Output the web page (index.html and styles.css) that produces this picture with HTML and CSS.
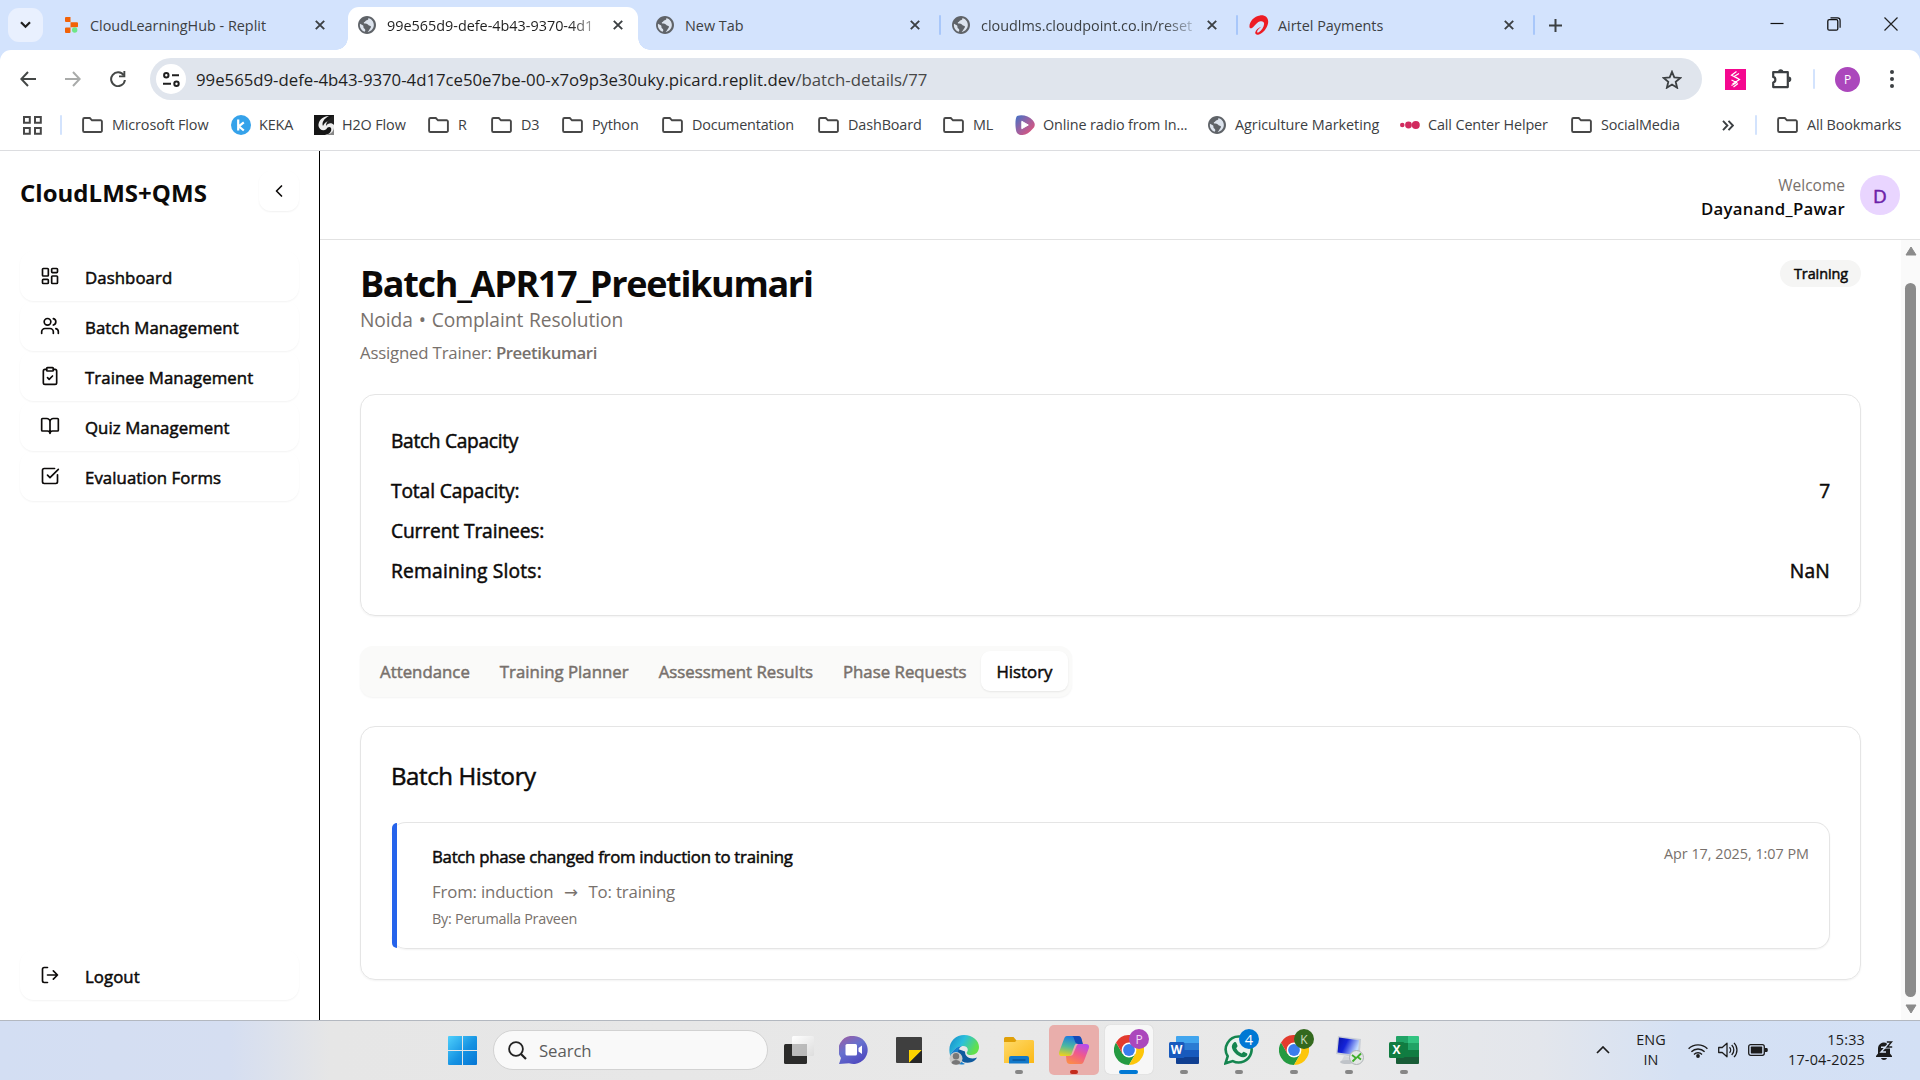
FILE: index.html
```html
<!DOCTYPE html>
<html lang="en">
<head>
<meta charset="utf-8">
<title>CloudLMS+QMS</title>
<link rel="stylesheet" href="styles.css">
</head>
<body>
<svg class="defs" width="0" height="0" aria-hidden="true">
  <defs>
    <symbol id="globe" viewBox="2 2 20 20"><path fill="#5f6368" d="M12 2C6.48 2 2 6.48 2 12s4.48 10 10 10 10-4.48 10-10S17.52 2 12 2z"/><path fill="#dde4ee" d="M13.500 4.200c.3 1.500-.5 2.300-1.700 2.600-1.500.3-1.300 1.600-2.500 1.900-1 .3-1.300 1.300-.2 1.600 1.600.2 3.600.2 4.200 1.500.4 1 1.500 1 2.600 1.400.8.500.6 1.500-.2 2.300-1 1-1.300 2.600-3 4.200 4-.8 6.900-3.900 6.900-7.800 0-3.500-2.400-6.600-6.100-7.700zM4.200 10.500c-.7 3.800 1.300 7.500 5.200 8.900.9-.8.9-1.700.4-2.700-.5-.8-1.500-.9-1.700-1.900-.2-1.300.3-1.900-.8-2.600z"/></symbol>
    <symbol id="x" viewBox="0 0 10 10"><path d="M.8.8l8.400 8.400M9.200.8L.8 9.200" stroke="currentColor" stroke-width="1.900" fill="none"/></symbol>
    <symbol id="folder" viewBox="0 0 21 16"><path d="M2.500 1h5.300l2.200 2.300h8.500A1.300 1.300 0 0 1 19.900 4.600v9A1.300 1.300 0 0 1 18.600 15H2.400A1.300 1.300 0 0 1 1.100 13.700V2.400A1.400 1.400 0 0 1 2.500 1z" fill="none" stroke="#474747" stroke-width="1.900"/></symbol>
    <symbol id="chrome" viewBox="0 0 30 30">
      <path d="M2 7.500A15 15 0 0 0 15 30L21.500 18.700 15 15 8.500 18.700z" fill="#249a41"/>
      <path d="M28 7.500A15 15 0 0 1 15 30L21.500 18.700 15 7.500z" fill="#fdc60a"/>
      <path d="M2 7.500L8.500 18.700 15 15V7.500h13A15 15 0 0 0 2 7.500z" fill="#e33b2e"/>
      <circle cx="15" cy="15" r="7.400" fill="#fff"/><circle cx="15" cy="15" r="5.900" fill="#3b7ded"/>
    </symbol>
  </defs>
</svg>

<div class="screen">
  <div class="tabstrip">
    <button class="tab-search"><svg width="11" height="8" viewBox="0 0 11 8"><path d="M1 1.200l4.500 4.600L10 1.200" fill="none" stroke="#1f1f1f" stroke-width="2.200"/></svg></button>
    <div class="tab tab-first">
      <svg class="favicon" width="14" height="16" viewBox="0 0 14 16"><path d="M1 0h4.500v5H1a1 1 0 0 1-1-1V1a1 1 0 0 1 1-1zM5.500 5.300H12a1 1 0 0 1 1 1v3a1 1 0 0 1-1 1H5.500zM1 10.500h4.500V15a1 1 0 0 1-1 1H1a1 1 0 0 1-1-1v-3.500a1 1 0 0 1 1-1z" fill="#f26207"/><circle cx="9.700" cy="13" r="2.700" fill="#6ee787"/></svg>
      <span class="tab-title">CloudLearningHub - Replit</span>
      <svg class="close"><use href="#x"/></svg>
    </div>
    <div class="tab tab-active">
      <svg class="favicon"><use href="#globe"/></svg>
      <span class="tab-title fade">99e565d9-defe-4b43-9370-4d1</span>
      <svg class="close"><use href="#x"/></svg>
    </div>
    <div class="tab">
      <svg class="favicon"><use href="#globe"/></svg>
      <span class="tab-title">New Tab</span>
      <svg class="close"><use href="#x"/></svg>
    </div>
    <div class="tab tab-ruled">
      <svg class="favicon"><use href="#globe"/></svg>
      <span class="tab-title fade">cloudlms.cloudpoint.co.in/reset</span>
      <svg class="close"><use href="#x"/></svg>
    </div>
    <div class="tab tab-ruled">
      <svg class="favicon airtel" width="20" height="20" viewBox="0 0 20 20"><path d="M.5 12C0 7 5 1 11 .4c6-.6 9 3 8 8-1 4.600-4.500 9.400-9 11-2.500.8-4.200-.2-3.700-2.200.6-2.300 3-4.200 6-5.400-2 1.600-4 3.400-4.200 5-.1 1 .8 1 2 .2 2.500-1.800 4.800-5 5-8 .2-2.200-1.600-3.400-4.500-2.600C7 7.400 5 12.500 2.500 13.200 1.300 13.400.6 13 .5 12z" fill="#ed1c24"/></svg>
      <span class="tab-title">Airtel Payments</span>
      <svg class="close"><use href="#x"/></svg>
    </div>
    <div class="new-tab"><svg width="13" height="13" viewBox="0 0 13 13"><path d="M6.500 0v13M0 6.500h13" stroke="#3c4043" stroke-width="2"/></svg></div>
    <div class="window-controls">
      <svg width="14" height="14" viewBox="0 0 14 14"><path d="M.5 6.500h13" stroke="#111" stroke-width="1.200"/></svg>
      <svg width="14" height="14" viewBox="0 0 14 14"><path d="M3.500.9h7a2.600 2.600 0 0 1 2.600 2.600v7.200" fill="none" stroke="#111" stroke-width="1.200"/><rect x=".8" y="2.700" width="10" height="10.500" rx="1.500" fill="none" stroke="#111" stroke-width="1.300"/></svg>
      <svg width="14" height="14" viewBox="0 0 14 14"><path d="M.5.5l13 13M13.500.5l-13 13" stroke="#222" stroke-width="1.200"/></svg>
    </div>
  </div>

  <div class="toolbar">
    <div class="nav-buttons">
      <svg width="16" height="16" viewBox="0 0 16 16"><path d="M16 8H1.500M8 1L1.300 8 8 15" fill="none" stroke="#444746" stroke-width="2"/></svg>
      <svg width="16" height="16" viewBox="0 0 16 16"><path d="M0 8h14.500M8 1l6.700 7L8 15" fill="none" stroke="#a9abaa" stroke-width="2"/></svg>
      <svg width="16" height="16" viewBox="0 0 16 16"><path d="M13.800 4.400A6.900 6.900 0 1 0 14.900 9" fill="none" stroke="#444746" stroke-width="2"/><path d="M15.300 0v6.300H9V4.400h4.400V0z" fill="#444746"/></svg>
    </div>
    <div class="omnibox">
      <span class="site-info"><svg width="17" height="15" viewBox="0 0 17 15"><g fill="none" stroke="#1f1f1f" stroke-width="2"><circle cx="3.300" cy="3.300" r="2.200"/><path d="M9 3.300h7M0 11.700h8"/><circle cx="13.500" cy="11.700" r="2.200"/></g></svg></span>
      <span class="url">99e565d9-defe-4b43-9370-4d17ce50e7be-00-x7o9p3e30uky.picard.replit.dev<span class="path">/batch-details/77</span></span>
      <svg class="star" width="20" height="19" viewBox="0 0 20 19"><path d="M10 1.800l2.300 5.600 6 .5-4.600 3.900 1.400 5.900-5.100-3.200-5.100 3.200 1.400-5.900L1.700 7.900l6-.5z" fill="none" stroke="#3c4043" stroke-width="1.800"/></svg>
    </div>
    <div class="extensions">
      <svg class="ext-pink" width="21" height="21" viewBox="0 0 21 21"><path d="M0 0h21v21H0z" fill="#f5078f"/><path d="M11.500 2.500L6.500 6.200l7 3.800M14 4.500L9.500 7.200l5 3.300-7 4.500M6.500 11l5 2.500-5 3M13 14.500l-4.500 3.500" fill="none" stroke="#fff" stroke-width="1.200"/></svg>
      <svg class="ext-puzzle" width="22" height="22" viewBox="0 0 22 22"><path d="M2.200 4.200h14.600v14.900H2.200v-4.600a2.900 2.900 0 0 0 0-5.600z" fill="none" stroke="#3c4043" stroke-width="2.200" stroke-linejoin="round"/><path d="M7 4a2.700 2.700 0 0 1 5.400 0zM17.500 8.500a2.800 2.800 0 0 1 0 5.600z" fill="#3c4043"/></svg>
      <i class="rule"></i>
      <span class="profile">P</span>
      <svg width="4" height="18" viewBox="0 0 4 18"><g fill="#3c4043"><circle cx="2" cy="2" r="2"/><circle cx="2" cy="9" r="2"/><circle cx="2" cy="16" r="2"/></g></svg>
    </div>
  </div>

  <div class="bookmarks">
    <svg class="apps" width="19" height="19" viewBox="0 0 19 19"><path d="M1 1h5.800v5.800H1zM12 1h5.800v5.800H12zM1 12h5.800v5.800H1zM12 12h5.800v5.800H12z" fill="none" stroke="#474747" stroke-width="2"/></svg>
    <i class="rule"></i>
    <div class="bm"><svg class="fold"><use href="#folder"/></svg>Microsoft Flow</div>
    <div class="bm"><svg width="20" height="20" viewBox="0 0 20 20"><circle cx="10" cy="10" r="10" fill="#35a2ea"/><path d="M7.200 4.500v11M12.800 7.300l-5 4 5 4.200" fill="none" stroke="#fff" stroke-width="2.200"/></svg>KEKA</div>
    <div class="bm"><svg width="20" height="20" viewBox="0 0 20 20"><path d="M0 0h20v20H0z" fill="#161616"/><path d="M20 2v18h-9c5-1 7-4 6-7-1-2-4-1-4.500 1C9 17 5 14 4.500 11 4 6 8 1.500 15 1 10 3.500 7.500 7.500 9 11c2-4.500 7-6 11-9z" fill="#eee"/><path d="M20 0v10c-2-2.500-6-2.500-8 1 0-4 3-8 8-11z" fill="#222"/><path d="M9 20c6 0 10-2 11-7v7z" fill="#888"/></svg>H2O Flow</div>
    <div class="bm"><svg class="fold"><use href="#folder"/></svg>R</div>
    <div class="bm"><svg class="fold"><use href="#folder"/></svg>D3</div>
    <div class="bm"><svg class="fold"><use href="#folder"/></svg>Python</div>
    <div class="bm tight"><svg class="fold"><use href="#folder"/></svg>Documentation</div>
    <div class="bm"><svg class="fold"><use href="#folder"/></svg>DashBoard</div>
    <div class="bm"><svg class="fold"><use href="#folder"/></svg>ML</div>
    <div class="bm"><svg width="20" height="20" viewBox="0 -1 20 20"><defs><linearGradient id="radio" x1="0" y1="0" x2="1" y2="1"><stop offset="0" stop-color="#3f73c8"/><stop offset=".5" stop-color="#a2609f"/><stop offset="1" stop-color="#f0506e"/></linearGradient></defs><path d="M2 0c5-2 12 0 15.500 4 3 3.500 3 6 0 9C13 19 4 21.500 1.500 16 0 11 0 2.500 2 0z" fill="url(#radio)"/><path d="M6.800 5.300v7.400l6.500-3.700z" fill="#fff" stroke="#fff" stroke-linejoin="round"/></svg>Online radio from In...</div>
    <div class="bm wide"><svg class="favicon"><use href="#globe"/></svg>Agriculture Marketing</div>
    <div class="bm"><svg width="20" height="8" viewBox="0 0 20 8"><g fill="#d12b5f"><circle cx="2.300" cy="4" r="2.300"/><circle cx="8.500" cy="4" r="3.400"/><circle cx="15.800" cy="4" r="4"/></g></svg>Call Center Helper</div>
    <div class="bm"><svg class="fold"><use href="#folder"/></svg>SocialMedia</div>
    <svg class="more" width="12" height="11" viewBox="0 0 12 11"><path d="M1 .8l4.400 4.700L1 10.200M6.500.8l4.400 4.700-4.400 4.700" fill="none" stroke="#3c4043" stroke-width="1.900"/></svg>
    <i class="rule"></i>
    <div class="bm"><svg class="fold"><use href="#folder"/></svg>All Bookmarks</div>
  </div>

  <div class="app">
    <aside class="sidebar">
      <div class="brand"><h2>CloudLMS+QMS</h2><button class="collapse"><svg class="ic" viewBox="0 0 24 24"><path d="m15 18-6-6 6-6"/></svg></button></div>
      <nav class="menu">
        <a class="item"><svg class="ic" viewBox="0 0 24 24"><rect width="7" height="9" x="3" y="3" rx="1"/><rect width="7" height="5" x="14" y="3" rx="1"/><rect width="7" height="9" x="14" y="12" rx="1"/><rect width="7" height="5" x="3" y="16" rx="1"/></svg><span>Dashboard</span></a>
        <a class="item"><svg class="ic" viewBox="0 0 24 24"><path d="M16 21v-2a4 4 0 0 0-4-4H6a4 4 0 0 0-4 4v2"/><circle cx="9" cy="7" r="4"/><path d="M22 21v-2a4 4 0 0 0-3-3.870M16 3.130a4 4 0 0 1 0 7.750"/></svg><span>Batch Management</span></a>
        <a class="item"><svg class="ic" viewBox="0 0 24 24"><rect width="8" height="4" x="8" y="2" rx="1"/><path d="M16 4h2a2 2 0 0 1 2 2v14a2 2 0 0 1-2 2H6a2 2 0 0 1-2-2V6a2 2 0 0 1 2-2h2M9 14l2 2 4-4"/></svg><span>Trainee Management</span></a>
        <a class="item"><svg class="ic" viewBox="0 0 24 24"><path d="M12 7v14M3 18a1 1 0 0 1-1-1V4a1 1 0 0 1 1-1h5a4 4 0 0 1 4 4 4 4 0 0 1 4-4h5a1 1 0 0 1 1 1v13a1 1 0 0 1-1 1h-6a3 3 0 0 0-3 3 3 3 0 0 0-3-3z"/></svg><span>Quiz Management</span></a>
        <a class="item"><svg class="ic" viewBox="0 0 24 24"><path d="M21 10.500V19a2 2 0 0 1-2 2H5a2 2 0 0 1-2-2V5a2 2 0 0 1 2-2h12.500"/><path d="m9 11 3 3L22 4"/></svg><span>Evaluation Forms</span></a>
      </nav>
      <a class="item logout"><svg class="ic" viewBox="0 0 24 24"><path d="M9 21H5a2 2 0 0 1-2-2V5a2 2 0 0 1 2-2h4M16 17l5-5-5-5M21 12H9"/></svg><span>Logout</span></a>
    </aside>

    <div class="main">
      <header class="topbar">
        <div class="who"><span class="welcome">Welcome</span><span class="user">Dayanand_Pawar</span></div>
        <span class="avatar">D</span>
      </header>
      <div class="scroller">
        <main class="content">
          <div class="heading">
            <div>
              <h1>Batch_APR17_Preetikumari</h1>
              <p class="sub">Noida • Complaint Resolution</p>
              <p class="trainer">Assigned Trainer: <b>Preetikumari</b></p>
            </div>
            <span class="badge">Training</span>
          </div>

          <section class="card capacity">
            <h3>Batch Capacity</h3>
            <div class="row"><span>Total Capacity:</span><span>7</span></div>
            <div class="row"><span>Current Trainees:</span><span></span></div>
            <div class="row slots"><span>Remaining Slots:</span><span>NaN</span></div>
          </section>

          <div class="tabs">
            <span>Attendance</span><span>Training Planner</span><span>Assessment Results</span><span>Phase Requests</span><span class="on">History</span>
          </div>

          <section class="card history">
            <h3>Batch History</h3>
            <article class="event">
              <div class="bar"></div>
              <div class="event-body">
                <h4>Batch phase changed from induction to training</h4>
                <p class="change"><span>From: induction</span><span class="arrow">→</span><span>To: training</span></p>
                <p class="by">By: Perumalla Praveen</p>
              </div>
              <time>Apr 17, 2025, 1:07 PM</time>
            </article>
          </section>
        </main>
        <div class="scrollbar">
          <svg width="12" height="10" viewBox="0 0 12 10"><path d="M6 1l5 8H1z" fill="#8b8b8b" stroke="#8b8b8b" stroke-linejoin="round"/></svg>
          <i class="thumb"></i>
          <svg width="12" height="10" viewBox="0 0 12 10"><path d="M6 9l5-8H1z" fill="#8b8b8b" stroke="#8b8b8b" stroke-linejoin="round"/></svg>
        </div>
      </div>
    </div>
  </div>

  <footer class="taskbar">
    <svg class="start" width="29" height="29" viewBox="0 0 29 29"><defs><linearGradient id="win" x1="0" y1="0" x2="1" y2="1"><stop offset="0" stop-color="#4fd0fc"/><stop offset=".55" stop-color="#1592e2"/><stop offset="1" stop-color="#0575d4"/></linearGradient></defs><path d="M1 0h13v14H0V1a1 1 0 0 1 1-1zM15 0h13a1 1 0 0 1 1 1v13H15zM0 15h14v14H1a1 1 0 0 1-1-1zM15 15h14v13a1 1 0 0 1-1 1H15z" fill="url(#win)"/></svg>
    <div class="search"><svg width="19" height="19" viewBox="0 0 19 19"><circle cx="8" cy="8" r="6.900" fill="none" stroke="#222" stroke-width="1.800"/><path d="M13 13l5 5" stroke="#222" stroke-width="2.200"/></svg><span>Search</span></div>
    <div class="tasks">
      <span class="task"><svg width="30" height="28" viewBox="0 0 30 28"><defs><linearGradient id="tv" x1="0" y1="0" x2="1" y2="1"><stop offset="0" stop-color="#fff"/><stop offset="1" stop-color="#ddd"/></linearGradient></defs><rect y="8" width="23" height="20" rx="1.500" fill="#2b2b2a"/><rect x="8" width="22" height="20" rx="1.500" fill="url(#tv)"/><path d="M8 8h15v12H8z" fill="#aaa" opacity=".75"/></svg></span>
      <span class="task"><svg width="29" height="28" viewBox="0 0 29 28"><defs><linearGradient id="chat" x1="0" y1="0" x2=".6" y2="1"><stop offset="0" stop-color="#a25b9e"/><stop offset=".5" stop-color="#6671cf"/><stop offset="1" stop-color="#504bc0"/></linearGradient></defs><path d="M15 0a14 14 0 1 1-5 27.200L0 28l2-6A14 14 0 0 1 15 0z" fill="url(#chat)"/><rect x="6.500" y="8" width="11.500" height="11.500" rx="1.500" fill="#fff"/><path d="M19.500 12l3.500-2.500v8.500L19.500 15.500z" fill="#fff"/></svg></span>
      <span class="task"><svg width="26" height="26" viewBox="0 0 26 26"><rect width="26" height="26" rx="1" fill="#3f3f3f"/><path d="M13 13h13L13 26z" fill="#ffd500"/><path d="M26 13v13H13z" fill="#272727"/></svg></span>
      <span class="task"><svg width="30" height="30" viewBox="0 0 30 30"><defs><linearGradient id="edge" x1="0" y1="0" x2="1" y2=".4"><stop offset="0" stop-color="#1486c8"/><stop offset=".5" stop-color="#2bbfdc"/><stop offset="1" stop-color="#62e04c"/></linearGradient></defs><path d="M9 14c-3 9 4 16 14 13 2-.7 4-2.500 5-4.500-5 2-12 1-12-6z" fill="#0f5a9e"/><path d="M1 20C-2 8 6 0 15 0c9 0 15 6 15 12 0 5-3.500 8-8 8-3.500 0-5-1.500-4-3 2-3 0-6-4-6-6 0-10 4-13 9z" fill="url(#edge)"/><path d="M1 20c3-5 7-9 12-9-6 3-6 14 3 18C9 31 2 27 1 20z" fill="#1681d0"/><circle cx="7" cy="23.500" r="6.500" fill="#c9c9c7"/><circle cx="7" cy="21.300" r="3.200" fill="#777"/><path d="M2.500 28c.5-4 8.500-4 9 0-2 2.300-7 2.300-9 0z" fill="#777"/></svg></span>
      <span class="task run"><svg width="30" height="27" viewBox="0 0 30 27"><defs><linearGradient id="fo" x1="0" y1="0" x2="1" y2="1"><stop offset="0" stop-color="#ffda6a"/><stop offset="1" stop-color="#fbb815"/></linearGradient></defs><path d="M0 1.500A1.500 1.500 0 0 1 1.500 0h8l3 3.500H20V9H0z" fill="#e0a008"/><path d="M0 5h11l2-2h15.500A1.500 1.500 0 0 1 30 4.500V26H0z" fill="url(#fo)"/><path d="M5 26.500V21a2 2 0 0 1 2-2h16a2 2 0 0 1 2 2v5.500z" fill="#1279ca"/><path d="M8.500 23h13" stroke="#0a4f91" stroke-width="1.300"/></svg></span>
      <span class="task run alert"><svg width="30" height="28" viewBox="0 0 30 28"><defs><linearGradient id="c1" x1=".4" y1="0" x2=".2" y2="1"><stop offset="0" stop-color="#1e7be0"/><stop offset=".5" stop-color="#4bb8a0"/><stop offset="1" stop-color="#f2d31b"/></linearGradient><linearGradient id="c2" x1=".8" y1="0" x2=".3" y2="1"><stop offset="0" stop-color="#b44bf0"/><stop offset=".5" stop-color="#f0598c"/><stop offset="1" stop-color="#fb8a4b"/></linearGradient></defs><path d="M8 0h11c2 0 3 1 3.500 3L23 7h-3c-3 0-4 1-5 4l-2.500 7c-.7 1.500-1.500 2-3 2H3c-3 0-3.500-2-2.700-4.500L5 3c.7-2 1.500-3 3-3z" fill="url(#c1)"/><path d="M13 0h6c2 0 3 1 3.500 3L24 8h-4c-3 0-3.500-1-4.500-4S14.500.5 13 0z" fill="#1549b8"/><path d="M22 28H11c-2 0-3-1-3.500-3L7 20h3c3 0 4-1 5-4l2.500-6c.7-1.500 1.500-2 3-2H27c3 0 3.500 2 2.700 4.500L25 25c-.7 2-1.500 3-3 3z" fill="url(#c2)"/></svg></span>
      <span class="task run current"><svg width="30" height="30"><use href="#chrome"/></svg><b class="dot purple">P</b></span>
      <span class="task run"><svg width="30" height="28" viewBox="0 0 30 28"><path d="M8 0h21a1 1 0 0 1 1 1v6H7V1a1 1 0 0 1 1-1z" fill="#41a5ee"/><path d="M7 7h23v7H7z" fill="#2b7cd3"/><path d="M7 14h23v7H7z" fill="#185abd"/><path d="M7 21h23v6a1 1 0 0 1-1 1H8a1 1 0 0 1-1-1z" fill="#103f91"/><rect y="6" width="15.500" height="16" rx="1.500" fill="#185abd"/></svg><b class="letter">W</b></span>
      <span class="task run"><svg width="30" height="30" viewBox="0 0 30 30"><path d="M15.500 1.500a13 13 0 1 1-6.700 24.600L1.500 28.300l2.200-7A13 13 0 0 1 15.500 1.500z" fill="#e9f2ed" stroke="#14854f" stroke-width="2.600"/><path d="M10 7.500c1-.8 2-.6 2.500.7l1 2.500c.3 1-1 1.800-1.300 2.500 1.200 2.600 3 4.200 5.500 5.200.8-.5 1.500-2 2.500-1.500l2.600 1.300c1 .6.600 2-.3 2.800-2 1.700-4.700 1.500-7.500 0-3.500-1.800-6-4.600-7-8-.6-2.200.4-4.200 2-5.500z" fill="#14854f"/></svg><b class="dot blue">4</b></span>
      <span class="task run"><svg width="30" height="30"><use href="#chrome"/></svg><b class="dot green">K</b></span>
      <span class="task run"><svg width="30" height="30" viewBox="0 0 30 30"><defs><linearGradient id="rd" x1="0" y1="0" x2="1" y2=".4"><stop offset="0" stop-color="#0a13a8"/><stop offset=".45" stop-color="#1423d8"/><stop offset="1" stop-color="#c3dcff"/></linearGradient></defs><path d="M4 1l23 3-1.500 19L2 19z" fill="#c9ced6"/><path d="M5 2.500l20 2.700-1.200 15L3.500 17.500z" fill="url(#rd)"/><path d="M10 21l8 1-1 5H7z" fill="#d5d7da"/><ellipse cx="13" cy="27" rx="7" ry="2" fill="#bfc3c8"/><circle cx="22.500" cy="22.500" r="7" fill="#e4e7e6" stroke="#adb2b5"/><path d="M18 20l4 3-3.500 3.500M27 18.500L23.500 22l3.500 2.500" fill="none" stroke="#3fae2a" stroke-width="1.800"/></svg></span>
      <span class="task run"><svg width="30" height="28" viewBox="0 0 30 28"><path d="M8 0h11v7H7V1a1 1 0 0 1 1-1z" fill="#21a366"/><path d="M19 0h10a1 1 0 0 1 1 1v6H19z" fill="#33c481"/><path d="M7 7h12v14H7z" fill="#107c41"/><path d="M19 7h11v7H19z" fill="#21a366"/><path d="M19 14h11v7H19z" fill="#107c41"/><path d="M7 21h23v6a1 1 0 0 1-1 1H8a1 1 0 0 1-1-1z" fill="#185c37"/><rect y="6" width="15.500" height="16" rx="1.500" fill="#107c41"/></svg><b class="letter">X</b></span>
    </div>
    <div class="tray">
      <svg width="14" height="8" viewBox="0 0 14 8"><path d="M1 7l6-6 6 6" fill="none" stroke="#1c1c1c" stroke-width="1.700"/></svg>
      <span class="lang">ENG<br>IN</span>
      <svg width="20" height="15" viewBox="0 0 20 15"><g fill="none" stroke="#1c1c1c" stroke-width="1.400"><path d="M.6 5.800a13.200 13.200 0 0 1 18.800 0M3.400 8.700a9.300 9.300 0 0 1 13.200 0M6 11.400a5.700 5.700 0 0 1 8 0"/></g><circle cx="10" cy="13" r="1.900" fill="#1c1c1c"/></svg>
      <svg class="vol" width="20" height="16" viewBox="0 0 20 16"><g fill="none" stroke="#1c1c1c" stroke-width="1.300" stroke-linejoin="round"><path d="M.7 5.500h3.500L9 1.200v13.600L4.200 10.500H.7z"/><path d="M11.500 5.200a4 4 0 0 1 0 5.600M13.700 3a7 7 0 0 1 0 10M16 .9a10 10 0 0 1 0 14.200"/></g></svg>
      <svg class="batt" width="20" height="12" viewBox="0 0 20 12"><rect x=".7" y=".7" width="15.600" height="10.600" rx="2" fill="none" stroke="#1c1c1c" stroke-width="1.300"/><rect x="2.800" y="2.600" width="11.400" height="6.800" rx=".6" fill="#1c1c1c"/><path d="M17 4h1.500c.8 0 1.300.5 1.300 2s-.5 2-1.300 2H17z" fill="#1c1c1c"/></svg>
      <span class="clock">15:33<br>17-04-2025</span>
      <span class="bell"><svg width="17" height="19" viewBox="0 0 17 19"><path d="M2 7.500a6 6 0 0 1 8.500-5.500l3.500 5v5.500L16 15v1H0v-1l2-2.500zM5 17h6c-.5 2.500-5.500 2.500-6 0z" fill="#1c1c1c"/><path d="M5 6.300h4.500L5 11h5" fill="none" stroke="#d6e2f4" stroke-width="1.400"/><path d="M10.500.9h5l-4.500 5h5" fill="none" stroke="#d6e2f4" stroke-width="3.400"/><path d="M10.800.9h4.700l-4.200 5h4.900" fill="none" stroke="#1c1c1c" stroke-width="1.500"/></svg></span>
    </div>
  </footer>
</div>
</body>
</html>
```
FILE: styles.css
```css
* { box-sizing: border-box; }
body { margin: 0; font-family: "Open Sans", "Noto Sans", sans-serif; color: #0c0a09; background: #fff; }
h1, h2, h3, h4, p { margin: 0; }
button { border: 0; padding: 0; background: none; font: inherit; }
svg { display: block; flex: none; }
.defs { position: absolute; }
.screen { width: 1920px; height: 1080px; display: flex; flex-direction: column; overflow: hidden; }
.rule { width: 2px; height: 20px; border-radius: 1px; background: #d3e3fd; }

/* medium weight: regular outlines thickened slightly */
.item, .badge, .capacity h3, .row, .tabs, .history h3, h4, .avatar { font-weight: 400; -webkit-text-stroke: .5px currentColor; }

/* browser tab strip */
.tabstrip { position: relative; z-index: 1; height: 50px; flex: none; display: flex; align-items: stretch; background: #d3e3fd; padding-left: 8px; }
.tab-search { width: 35px; height: 34px; margin-top: 8px; border-radius: 11px; background: #e9f0fe; display: flex; align-items: center; justify-content: center; }
.tab { position: relative; width: 297px; padding: 0 19px 0 14px; display: flex; align-items: center; font-size: 14.4px; color: #3c4043; }
.favicon { width: 18px; height: 18px; }
.tab .favicon { margin-right: 11px; }
.tab-first { width: 297px; margin-left: 4px; padding: 0 19px 0 16px; }
.tab-first .favicon { width: 14px; height: 16px; margin: 0 11px 0 2px; }
.tab .airtel { width: 20px; height: 20px; margin-left: 0; margin-right: 9px; }
.tab-title { flex: 1; white-space: nowrap; }
.fade { -webkit-mask-image: linear-gradient(90deg, #000 86%, rgba(0,0,0,.25)); mask-image: linear-gradient(90deg, #000 86%, rgba(0,0,0,.25)); }
.close { width: 10px; height: 10px; margin-left: 14px; color: #3c4043; }
.tab-active { z-index: 2; width: 290px; margin: 7px 4px 0 4px; padding: 0 15px 7px 10px; background: #fff; border-radius: 11px 11px 0 0; color: #1f1f1f; }
.tab-active::before, .tab-active::after { content: ""; position: absolute; bottom: 0; width: 12px; height: 12px; }
.tab-active::before { left: -12px; background: radial-gradient(circle at 0 0, transparent 11.5px, #fff 12px); }
.tab-active::after { right: -12px; background: radial-gradient(circle at 100% 0, transparent 11.5px, #fff 12px); }
.tab-ruled::before, .new-tab::before { content: ""; position: absolute; left: 0; top: 15px; width: 2px; height: 20px; border-radius: 1px; background: #a8c7fa; }
.tab-ruled { padding-left: 13px; }
.new-tab { position: relative; width: 60px; display: flex; align-items: center; padding-left: 16px; }
.window-controls { margin-left: auto; padding: 0 22px 2px 0; display: flex; align-items: center; gap: 43px; }

/* toolbar */
.toolbar { position: relative; height: 56px; flex: none; display: flex; align-items: center; padding: 2px 17px 0 20px; background: #fff; border-radius: 11px 11px 0 0; box-shadow: 0 -12px 0 #d3e3fd; }
.nav-buttons { width: 130px; display: flex; gap: 29px; }
.omnibox { width: 1552px; height: 42px; border-radius: 21px; background: #e0e5ed; display: flex; align-items: center; padding: 0 20px 0 6px; }
.site-info { width: 30px; height: 30px; border-radius: 50%; background: #fff; display: flex; align-items: center; justify-content: center; }
.url { flex: 1; margin-left: 10px; font-size: 16.8px; letter-spacing: -.02px; color: #1f1f1f; white-space: nowrap; }
.path { color: #474747; }
.extensions { flex: 1; display: flex; align-items: center; padding-left: 23px; }
.ext-puzzle { margin: 0 20px 0 25px; }
.profile { width: 25px; height: 25px; margin: 0 30px 0 20px; border-radius: 50%; background: #ab47bc; color: #fff; font-size: 12px; display: flex; align-items: center; justify-content: center; }

/* bookmarks bar */
.bookmarks { height: 45px; flex: none; display: grid; align-items: center; padding: 1px 0 7px 23px; border-bottom: 1px solid #dcdde0;
  grid-template-columns: 37px 22px 149px 83px 114px 63px 71px 100px 156px 125px 72px 193px 192px 171px 151px 33px 22px auto; }
.bm { display: flex; align-items: center; gap: 8px; font-size: 14.4px; letter-spacing: -.12px; line-height: 20px; color: #3c4043; white-space: nowrap; }
.bm.tight { letter-spacing: -.19px; }
.bm.wide { gap: 9px; letter-spacing: -.05px; }
.bm .fold { width: 21px; height: 16px; margin-right: 1px; }

/* application shell */
.app { height: 869px; flex: none; display: flex; }
.sidebar { width: 320px; flex: none; border-right: 1px solid #000; display: flex; flex-direction: column; padding: 20px; }
.brand { display: flex; justify-content: space-between; height: 40px; }
.brand h2 { font-size: 24px; line-height: 44px; font-weight: 700; letter-spacing: .03px; }
.collapse { width: 40px; height: 40px; border-radius: 12px; box-shadow: 0 1px 2px rgba(0,0,0,.06); display: flex; align-items: center; justify-content: center; }
.ic { width: 20px; height: 20px; fill: none; stroke: #0c0a09; stroke-width: 2; stroke-linecap: round; stroke-linejoin: round; }
.menu { margin-top: 40px; display: flex; flex-direction: column; }
.item { height: 50px; display: flex; align-items: center; gap: 25px; padding-left: 20px; border-radius: 14px; box-shadow: 0 1px 2px rgba(0,0,0,.05); font-size: 16.8px; letter-spacing: .07px; }
.item span { margin-top: 3px; }
.logout { margin-top: auto; }
.main { flex: 1; display: flex; flex-direction: column; }
.topbar { height: 89px; flex: none; border-bottom: 1px solid #e2e2e2; display: flex; justify-content: flex-end; align-items: center; gap: 15px; padding-right: 20px; }
.who { display: flex; flex-direction: column; align-items: flex-end; padding-top: 3px; }
.welcome { font-size: 15.5px; line-height: 24px; color: #78716c; }
.user { font-size: 16.8px; line-height: 24px; font-weight: 600; letter-spacing: .28px; }
.avatar { width: 40px; height: 40px; padding-top: 2px; border-radius: 50%; background: #e9d5ff; color: #6b21a8; font-size: 19px; display: flex; align-items: center; justify-content: center; }
.scroller { flex: 1; display: flex; min-height: 0; }
.content { flex: 1; padding: 20px 40px 0 40px; }
.scrollbar { width: 19px; background: #fafafa; display: flex; flex-direction: column; align-items: center; padding: 6px 0; gap: 6px; }
.thumb { flex: 1; width: 11px; margin: 21px 0 1px; border-radius: 6px; background: #8b8b8b; }

/* batch details */
.heading { display: flex; justify-content: space-between; align-items: flex-start; height: 134px; }
h1 { font-size: 36px; line-height: 47px; font-weight: 700; letter-spacing: -1.32px; }
.sub { font-size: 19.2px; line-height: 26px; letter-spacing: -.08px; word-spacing: 1px; color: #78716c; }
.trainer { margin-top: 7px; font-size: 16.8px; line-height: 26px; letter-spacing: -.19px; color: #78716c; }
.trainer b { font-weight: 600; letter-spacing: -.43px; }
.badge { height: 27px; padding: 0 13px 0 14px; border-radius: 14px; background: #f5f5f4; font-size: 14.4px; line-height: 28px; letter-spacing: -.07px; }
.card { border: 1px solid #e5e5e5; border-radius: 15px; box-shadow: 0 1px 2px rgba(0,0,0,.05); }
.capacity { height: 222px; padding: 31px 30px; }
.capacity h3 { font-size: 19.2px; line-height: 30px; letter-spacing: -.32px; margin-bottom: 15px; }
.row { display: flex; justify-content: space-between; height: 40px; font-size: 19.2px; line-height: 40px; letter-spacing: -.12px; }
.slots { letter-spacing: .21px; }
.tabs { width: 712px; height: 51px; margin-top: 30px; padding: 5px; border-radius: 13px; background: #fafaf9; display: flex; font-size: 16.8px; line-height: 42px; letter-spacing: .02px; color: #78716c; box-shadow: 0 1px 2px rgba(0,0,0,.05); white-space: nowrap; }
.tabs span { padding: 0 15px; height: 40px; }
.tabs .on { border-radius: 9px; background: #fff; color: #0c0a09; box-shadow: 0 1px 2px rgba(0,0,0,.08); }
.history { margin-top: 29px; height: 254px; padding: 30px; }
.history h3 { font-size: 24px; line-height: 38px; letter-spacing: -.4px; }
.event { margin-top: 27px; height: 127px; display: flex; border: 1px solid #e5e5e5; border-left: 0; border-radius: 15px; box-shadow: 0 1px 2px rgba(0,0,0,.05); padding-right: 20px; }
.bar { width: 5px; margin-left: 1px; border-radius: 5px 0 0 5px; background: #2563eb; }
.event-body { flex: 1; padding: 20px 0 0 35px; }
h4 { font-size: 16.8px; line-height: 27px; letter-spacing: -.27px; }
.change { display: flex; align-items: center; margin-top: 8px; font-size: 16.8px; line-height: 28px; letter-spacing: -.15px; color: #78716c; }
.arrow { font-family: "DejaVu Sans", sans-serif; width: 35px; text-align: center; }
.by { margin-top: 2px; font-size: 14.4px; line-height: 22px; letter-spacing: -.26px; color: #78716c; }
.event time { margin-top: 20px; font-size: 14.4px; line-height: 22px; color: #78716c; letter-spacing: -.03px; }

/* taskbar */
.taskbar { height: 60px; flex: none; display: flex; align-items: center; padding-bottom: 1px; border-top: 1px solid #b3b8c0; background: linear-gradient(90deg, #d3def3 0, #d5def1 230px, #e6e6e6 330px, #e9e9e9 1350px, #e3e6ec 1540px, #d5e1f4 1680px, #d3e0f5); }
.start { margin-left: 448px; }
.search { width: 275px; height: 40px; margin-left: 16px; border: 1px solid #d2d2d2; border-radius: 20px; background: #f9f9f9; display: flex; align-items: center; padding-left: 14px; font-size: 16.8px; letter-spacing: -.1px; color: #5c5c5c; }
.search span { margin-left: 12px; }
.tasks { display: flex; margin-left: 3px; }
.task { position: relative; width: 55px; height: 60px; display: flex; align-items: center; justify-content: center; }
.task svg { position: relative; }
.run::after { content: ""; position: absolute; left: 23.5px; bottom: 6px; width: 8px; height: 4px; border-radius: 2px; background: #868686; }
.alert::before { content: ""; position: absolute; left: 2.5px; top: 5px; width: 50px; height: 50px; border-radius: 5px; background: #e9aeab; }
.alert::after { background: #c42b1c; }
.current::before { content: ""; position: absolute; left: 3.5px; top: 5px; width: 48px; height: 49px; border-radius: 5px; background: #f7f7f7; box-shadow: 0 0 1px #bbb; }
.current::after { left: 18px; width: 19px; background: #0078d4; }
.dot { position: absolute; left: 28px; top: 9px; width: 20px; height: 20px; border-radius: 50%; color: #fff; font-size: 12px; font-weight: 500; display: flex; align-items: center; justify-content: center; }
.purple { background: #ab47bc; color: #f0d8f4; }
.green { background: #33691e; color: #c9dcbf; }
.blue { background: #0078d4; font-size: 14.5px; }
.letter { position: absolute; left: 13px; top: 20px; width: 15px; text-align: center; font-size: 12px; line-height: 20px; font-weight: 700; color: #fff; }
.tray { margin-left: auto; display: flex; align-items: center; padding-right: 27px; font-size: 14.4px; line-height: 20px; color: #1c1c1c; }
.lang { width: 42px; margin: 0 16px 0 20px; text-align: center; }
.vol { margin-left: 10px; }
.batt { margin-left: 10px; }
.clock { margin-left: 20px; text-align: right; letter-spacing: .19px; }
.bell { margin-left: 11px; }
```
